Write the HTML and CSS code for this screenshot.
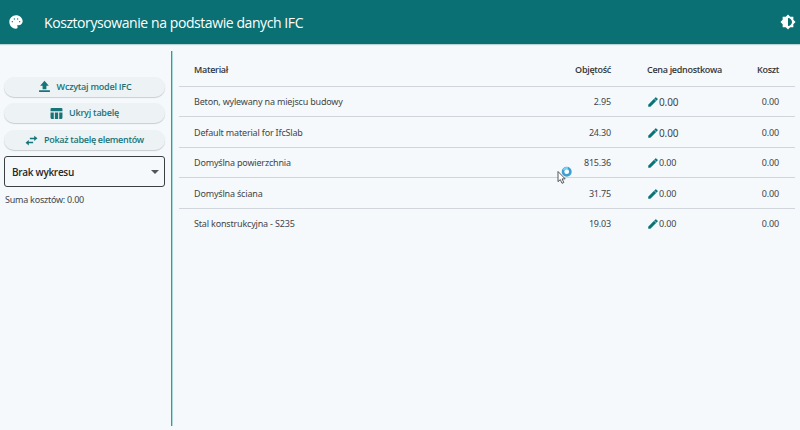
FILE: index.html
```html
<!DOCTYPE html>
<html lang="pl">
<head>
<meta charset="utf-8">
<title>Kosztorysowanie na podstawie danych IFC</title>
<link rel="stylesheet" href="styles.css">
</head>
<body>
<svg class="defs" aria-hidden="true">
  <symbol id="pencil" viewBox="0 0 24 24"><path stroke="currentColor" d="M3 17.25V21h3.75L17.81 9.94l-3.75-3.75L3 17.25zM20.71 7.04a1 1 0 0 0 0-1.41l-2.34-2.34a1 1 0 0 0-1.41 0l-1.83 1.83 3.75 3.75 1.83-1.83z"/></symbol>
</svg>
<header class="bar">
  <svg class="palette" viewBox="0 0 24 24"><path d="M12 2C6.49 2 2 6.49 2 12s4.49 10 10 10c1.38 0 2.5-1.12 2.5-2.5 0-.61-.23-1.2-.64-1.67-.08-.1-.13-.21-.13-.33 0-.28.22-.5.5-.5H16c3.31 0 6-2.69 6-6 0-4.96-4.49-9-10-9zm5.500 10.500c-.6 0-1-.4-1-1s.4-1 1-1 1 .4 1 1-.4 1-1 1zm-3-4c-.6 0-1-.4-1-1s.4-1 1-1 1 .4 1 1-.4 1-1 1zM5.500 11.500c0-.6.4-1 1-1s1 .4 1 1-.4 1-1 1-1-.4-1-1zm5-4c0 .6-.4 1-1 1s-1-.4-1-1 .4-1 1-1 1 .4 1 1z"/></svg>
  <h1 class="title">Kosztorysowanie na podstawie danych IFC</h1>
  <svg class="theme" viewBox="0 0 24 24"><path d="M20 15.310L23.310 12 20 8.690V4h-4.690L12 .69 8.690 4H4v4.690L.69 12 4 15.310V20h4.690L12 23.310 15.310 20H20v-4.690zM12 18V6c3.310 0 6 2.690 6 6s-2.690 6-6 6z"/></svg>
</header>
<main class="layout">
  <aside class="side">
    <button class="btn load"><svg viewBox="0 0 24 24"><path d="M8.500 17h7v-6.500H20L12 1.500l-8 9h4.500zM2 19h20v3H2z"/></svg><span>Wczytaj model IFC</span></button>
    <button class="btn hide"><svg viewBox="0 0 24 24"><path d="M1 8V4a2 2 0 0 1 2-2h18a2 2 0 0 1 2 2v4zM1 10h6v12H3a2 2 0 0 1-2-2zM9 10h6v12H9zM17 10h6v10a2 2 0 0 1-2 2h-4z"/></svg><span>Ukryj tabelę</span></button>
    <button class="btn show"><svg viewBox="0 0 24 24"><path d="M23 8l-6-5v4H9v2.500h8V13zM1 16l6 5v-4h8v-2.500H7V11z"/></svg><span>Pokaż tabelę elementów</span></button>
    <div class="select"><span>Brak wykresu</span><i class="caret"></i></div>
    <p class="sum">Suma kosztów: 0.00</p>
  </aside>
  <section class="content">
    <div class="row head"><span class="mat">Materiał</span><span class="vol">Objętość</span><span class="price">Cena jednostkowa</span><span class="cost">Koszt</span></div>
    <div class="row"><span class="mat">Beton, wylewany na miejscu budowy</span><span class="vol">2.95</span><span class="price large"><svg><use href="#pencil"/></svg>0.00</span><span class="cost">0.00</span></div>
    <div class="row"><span class="mat">Default material for IfcSlab</span><span class="vol">24.30</span><span class="price large"><svg><use href="#pencil"/></svg>0.00</span><span class="cost">0.00</span></div>
    <div class="row"><span class="mat">Domyślna powierzchnia</span><span class="vol">815.36</span><span class="price"><svg><use href="#pencil"/></svg>0.00</span><span class="cost">0.00</span></div>
    <div class="row"><span class="mat">Domyślna ściana</span><span class="vol">31.75</span><span class="price"><svg><use href="#pencil"/></svg>0.00</span><span class="cost">0.00</span></div>
    <div class="row"><span class="mat">Stal konstrukcyjna - S235</span><span class="vol">19.03</span><span class="price"><svg><use href="#pencil"/></svg>0.00</span><span class="cost">0.00</span></div>
  </section>
</main>
<svg class="cursor" viewBox="0 0 18 20"><circle cx="9.700" cy="5.700" r="3.700" fill="#fff" stroke="#3b9fd4" stroke-width="2.600"/><path d="M6.500 4A3.900 3.900 0 0 1 11 2.200" fill="none" stroke="#78d3ee" stroke-width="1.800"/><path d="M1 5.500v10.200l2.300-2.100 1.700 3.700 1.800-.8-1.700-3.600h3.100z" fill="#fff" stroke="#444" stroke-width=".9"/></svg>
</body>
</html>
```
FILE: styles.css
```css
* { box-sizing: border-box; }
body {
  margin: 0;
  height: 430px;
  overflow: hidden;
  background: #f5f9fc;
  color: #424548;
  font: 9px/12px "Noto Sans", "Open Sans", sans-serif;
}
.defs { display: none; }
svg { fill: currentColor; flex: none; }
.bar {
  display: flex;
  align-items: center;
  height: 44px;
  padding: 0 4px 0 8px;
  background: #0a7073;
  box-shadow: 0 1px 1px #b9d3d6;
  color: #fff;
}
.palette { width: 16px; height: 16px; }
.title {
  margin: 2px auto 0 20px;
  font: 400 14px/20px "Open Sans", "Noto Sans", sans-serif;
  letter-spacing: -.42px;
  white-space: nowrap;
}
.theme { width: 16px; height: 16px; }
.layout { display: flex; height: 386px; padding: 7px 5px 4px 4px; }
.side {
  display: flex;
  flex: none;
  flex-direction: column;
  width: 168px;
  padding: 25.500px 6px 0 0;
  border-right: 1px solid #359b9c;
  box-shadow: 1px 0 #a9d9d9;
}
.btn {
  display: flex;
  align-items: center;
  justify-content: center;
  gap: 6px;
  height: 20px;
  margin: 0 0 6.800px;
  padding: 0;
  border: 0;
  border-radius: 10px;
  background: #edf2f4;
  box-shadow: 0 1px 1px #c9ced1;
  color: #17757a;
  font: 600 9px/12px "Open Sans", "Noto Sans", sans-serif;
  letter-spacing: -.23px;
  white-space: nowrap;
}
.btn svg { width: 13px; height: 13px; }
.show { letter-spacing: -.3px; }
.select {
  display: flex;
  align-items: center;
  justify-content: space-between;
  height: 31px;
  margin-top: -.500px;
  padding: 0 5px 0 7px;
  border: 1px solid #3c4043;
  border-radius: 3px;
  color: #25282a;
  font: 600 10px/12px "Open Sans", "Noto Sans", sans-serif;
  letter-spacing: -.3px;
}
.caret { border: 4px solid transparent; border-top-color: #555; border-bottom: 0; }
.sum { margin: 7px 0 0 1px; letter-spacing: -.24px; white-space: nowrap; }
.content { flex: 1; margin-left: 7px; }
.row {
  display: grid;
  grid-template-columns: 300px 117px 132px 1fr;
  align-items: center;
  height: 30.450px;
  padding: 1px 16px 0 15px;
  border-bottom: 1px solid #d0d6db;
  letter-spacing: -.18px;
  white-space: nowrap;
}
.row:last-child { border: 0; }
.head { height: 36px; padding-top: 2px; font: 600 9px/12px "Open Sans", "Noto Sans", sans-serif; color: #34373a; letter-spacing: -.3px; }
.mat { justify-self: start; }
.vol, .cost { text-align: right; }
.price { display: flex; align-items: center; padding-left: 36px; }
.price svg { width: 12px; height: 12px; color: #087477; }
.large { font-size: 10px; letter-spacing: -.1px; }
.cursor { position: absolute; left: 557px; top: 166px; width: 18px; height: 20px; }
```
